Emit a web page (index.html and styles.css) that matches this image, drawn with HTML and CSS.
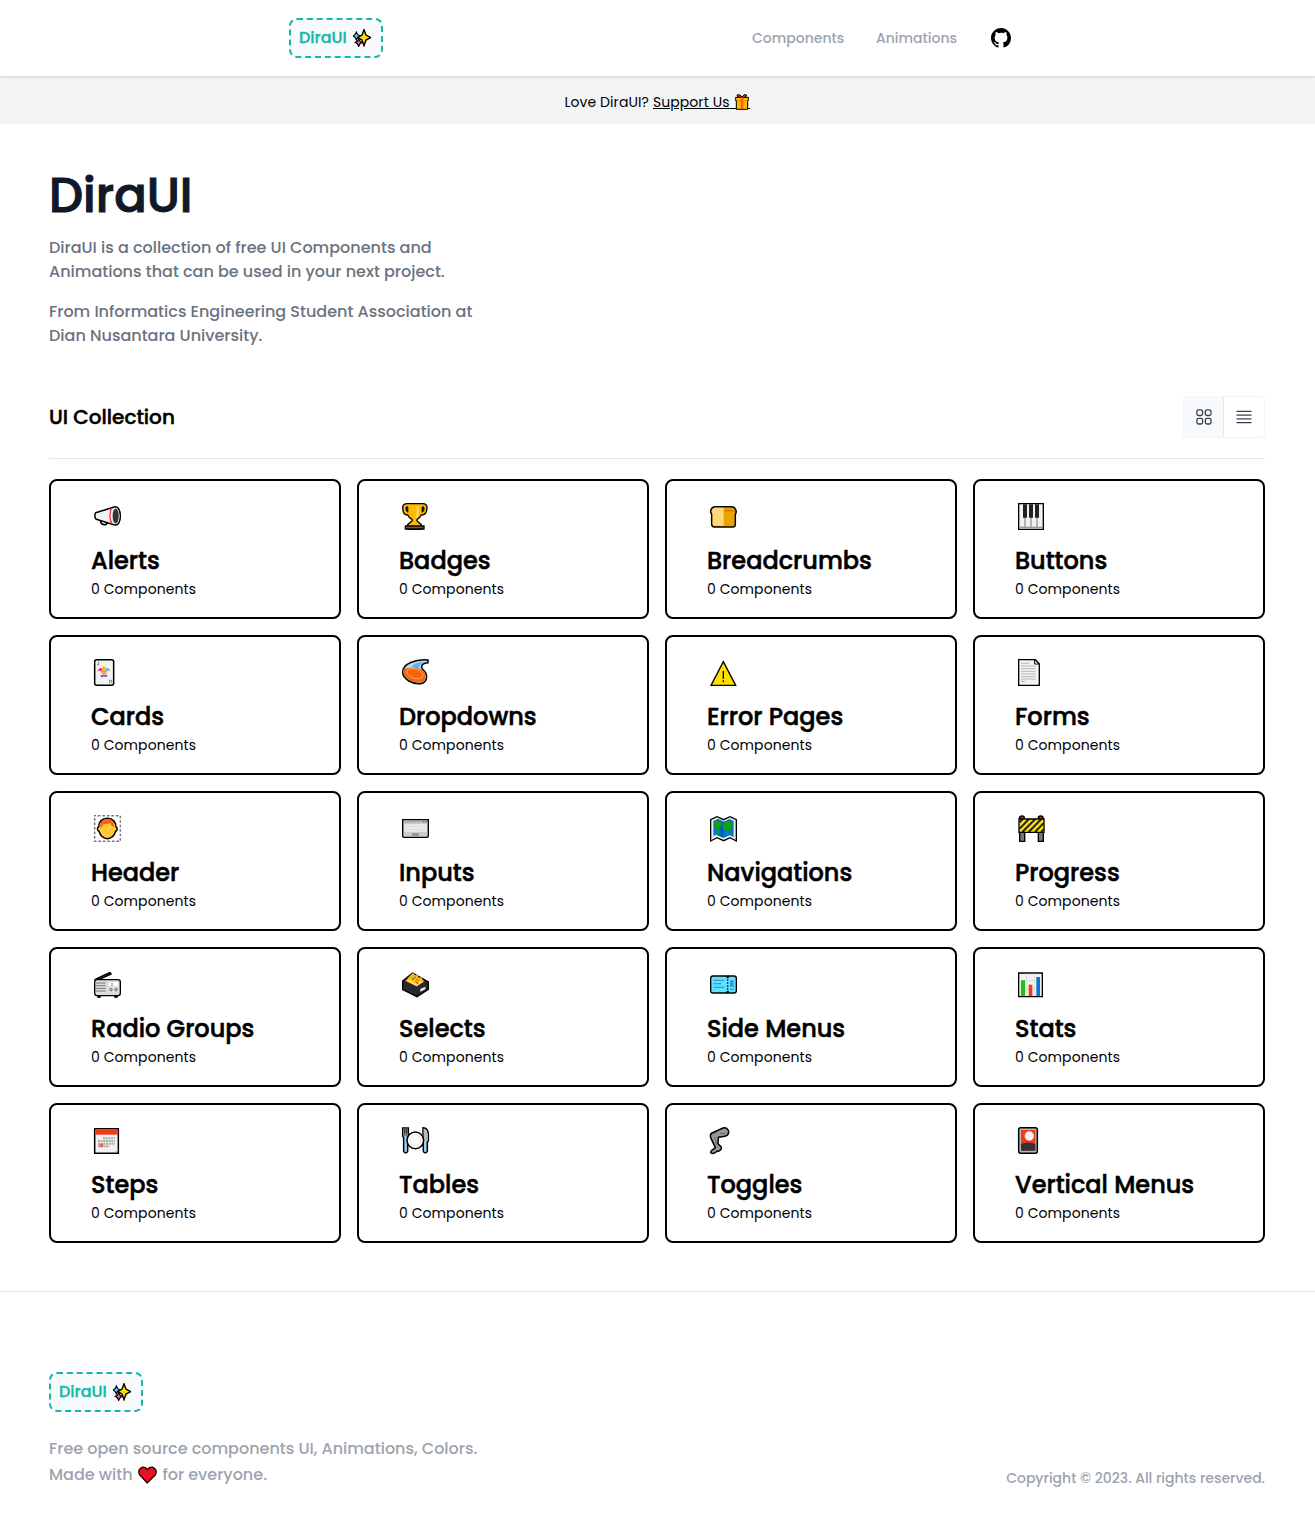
FILE: index.html
```html
<!DOCTYPE html>
<html lang="en">
<head>
<meta charset="utf-8">
<title>DiraUI</title>
<link rel="stylesheet" href="styles.css">
</head>
<body>
<svg class="defs" width="0" height="0">
  <symbol id="sparkles" viewBox="0 0 54 54">
    <path d="M10 9l4 8 8 4-8 4-4 8-4-8-6-4 6-4z" fill="#5cd3f0" stroke="#000" stroke-width="3.6"/>
    <path d="M17 30l4 7 7 3-7 4-4 8-4-8-6-4 6-3z" fill="#f06aa8" stroke="#000" stroke-width="3.6"/>
    <path d="M33 2l6 16 14 8-14 7-6 17-6-17-13-7 13-8z" fill="#fce100" stroke="#000" stroke-width="4.2"/>
  </symbol>
</svg>
<header class="header">
  <div class="header-inner">
    <a class="logo"><span class="logo-text">DiraUI</span><svg class="logo-icon"><use href="#sparkles"/></svg></a>
    <nav class="nav">
      <a class="nav-link">Components</a>
      <a class="nav-link nav-second">Animations</a>
      <svg class="github" viewBox="0 0 16 16"><path d="M8 0C3.58 0 0 3.58 0 8c0 3.54 2.29 6.53 5.47 7.59.4.07.55-.17.55-.38 0-.19-.01-.82-.01-1.49-2.01.37-2.53-.49-2.69-.94-.09-.23-.48-.94-.82-1.13-.28-.15-.68-.52-.01-.53.63-.01 1.08.58 1.23.82.72 1.21 1.87.87 2.33.66.07-.52.28-.87.51-1.07-1.78-.2-3.64-.89-3.64-3.95 0-.87.31-1.59.82-2.15-.08-.2-.36-1.02.08-2.12 0 0 .67-.21 2.2.82A7.6 7.6 0 0 1 8 3.86c.68 0 1.36.09 2 .27 1.53-1.04 2.2-.82 2.2-.82.44 1.1.16 1.92.08 2.12.51.56.82 1.27.82 2.15 0 3.07-1.87 3.75-3.65 3.95.29.25.54.73.54 1.48 0 1.07-.01 1.93-.01 2.2 0 .21.15.46.55.38A8.01 8.01 0 0 0 16 8c0-4.42-3.58-8-8-8z"/></svg>
    </nav>
  </div>
</header>
<div class="banner"><span class="banner-text">Love DiraUI?</span> <a class="support"><span>Support Us</span><svg class="gift" viewBox="0 0 48 48"><path d="M-13 43.5h61" stroke="#000" stroke-width="3"/><path d="M12 10l-3-7 8-1 7 7 6-7 8 1-3 7z" fill="#f03a17" stroke="#000" stroke-width="3"/><path d="M5 10h38v10h-2v26H7V20H5z" fill="#ffb900" stroke="#000" stroke-width="3"/><path d="M8 20h32" stroke="#d67d00" stroke-width="2"/><path d="M20 10h8v35h-8z" fill="#f7630c"/></svg></a></div>
<main class="container">
  <h1 class="title">DiraUI</h1>
  <p class="lead">DiraUI is a collection of free UI Components and<br>Animations that can be used in your next project.</p>
  <p class="lead">From Informatics Engineering Student Association at<br>Dian Nusantara University.</p>
  <div class="toolbar">
    <h2 class="section-title">UI Collection</h2>
    <div class="switch">
      <span class="switch-item active"><svg viewBox="0 0 20 20" fill="none" stroke="#374151" stroke-width="1.3"><rect x="2.9" y="2.8" width="5.7" height="5.7" rx="1.7"/><rect x="11.3" y="2.8" width="5.7" height="5.7" rx="1.7"/><rect x="2.9" y="11.3" width="5.7" height="5.7" rx="1.7"/><rect x="11.3" y="11.3" width="5.7" height="5.7" rx="1.7"/></svg></span>
      <span class="switch-item"><svg viewBox="0 0 20 20" stroke="#374151" stroke-width="1.25" stroke-linecap="round"><path d="M3 4.4h14M3 8.2h14M3 11.8h14M3 15.6h14"/></svg></span>
    </div>
  </div>
  <div class="grid">
    <article class="card"><svg class="icon" viewBox="0 0 81 81"><path d="M20 54c0 14 20 14 20 4" fill="none" stroke="#000" stroke-width="5"/><path d="M5 29l56-17c11-3 18 10 18 27S73 68 62 66L7 49c-5-3-6-16-2-20z" fill="#f2f2f2" stroke="#000" stroke-width="4.5"/><path d="M53 15c-7 12-7 36 1 47" fill="none" stroke="#f4303e" stroke-width="4"/><ellipse cx="65" cy="39" rx="11" ry="24" fill="#ddd"/><ellipse cx="65" cy="39" rx="9" ry="22" fill="#333"/></svg><h3 class="card-title">Alerts</h3><p class="count">0 Components</p></article>
    <article class="card"><svg class="icon" viewBox="0 0 81 81"><path d="M16 2h46q13 0 13 12c0 14-6 22-17 22q-4 9-13 13v5l13 11v14H17V65l13-11v-5q-9-4-13-13C6 36 2 28 2 14Q2 2 16 2z" fill="#ffb900" stroke="#000" stroke-width="4"/><path d="M12 12q5-3 6 1v15q-9-2-6-16zM66 12q-5-3-6 1v15q9-2 6-16z" fill="#222" stroke="#000" stroke-width="2"/><path d="M10 69h56v9H10z" fill="#8e562e" stroke="#000" stroke-width="4"/><path d="M47 10v25q-1 5-6 9" fill="none" stroke="#ffd679" stroke-width="6"/></svg><h3 class="card-title">Badges</h3><p class="count">0 Components</p></article>
    <article class="card"><svg class="icon" viewBox="0 0 81 81"><path d="M16 11h49c11 0 17 15 11 23v30q0 8-8 8H13q-8 0-8-8V34C-2 25 4 11 16 11z" fill="#eaa300" stroke="#000" stroke-width="4.5"/><path d="M16 14h25v54H13q-5 0-5-5V33C2 25 7 14 16 14z" fill="#ffd679"/><path d="M43 23h31" stroke="#d67d00" stroke-width="5"/></svg><h3 class="card-title">Breadcrumbs</h3><p class="count">0 Components</p></article>
    <article class="card"><svg class="icon" viewBox="0 0 81 81"><path d="M2 2h74v77H2z" fill="#f2f2f2" stroke="#000" stroke-width="4"/><path d="M21 42v34M39 42v34M57 42v34" stroke="#777" stroke-width="3"/><path d="M15 4h12v40H15zM33 4h12v40H33zM51 4h12v40H51z" fill="#222"/><path d="M5 73h68" stroke="#999" stroke-width="4"/></svg><h3 class="card-title">Buttons</h3><p class="count">0 Components</p></article>

    <article class="card"><svg class="icon" viewBox="0 0 81 81"><rect x="2" y="2" width="57" height="77" rx="6" fill="#f2f2f2" stroke="#000" stroke-width="4.5"/><path d="M14 8v9H9M47 73v-9h6v9" fill="none" stroke="#555" stroke-width="2"/><path d="M11 38q3-13 13-10l-2 11-5-6z" fill="#e3008c"/><path d="M49 38q-3-13-13-10l2 11 5-6z" fill="#19b5e5"/><path d="M23 30l7-10 8 10-3 7H25z" fill="#ffb900"/><circle cx="30" cy="40" r="8" fill="#f7a66a"/><path d="M26 38h1M34 38h1" stroke="#333" stroke-width="3"/><path d="M19 47l7 2 4-2 4 2 7-2-4 8h-3l-4-4-4 4h-4z" fill="#7654b8"/></svg><h3 class="card-title">Cards</h3><p class="count">0 Components</p></article>
    <article class="card"><svg class="icon" viewBox="0 0 81 81"><path d="M78 3v8C60 12 53 23 65 34c16 16 9 38-10 40C31 76 2 60 2 40 2 14 41 0 78 3z" fill="#b5def5" stroke="#000" stroke-width="4.5"/><path d="M5 31C19 23 62 23 68 43c9 18-4 27-13 28C33 73-4 55 5 31z" fill="#f7630c"/><path d="M28 24C40 8 57 12 70 7c-15 8-20 12-18 22z" fill="#69aee7"/><ellipse cx="39" cy="44" rx="25" ry="14" transform="rotate(18 39 44)" fill="#f7630c" stroke="#ffb083" stroke-width="2.5"/></svg><h3 class="card-title">Dropdowns</h3><p class="count">0 Components</p></article>
    <article class="card"><svg class="icon" viewBox="0 0 81 81"><path d="M40 8l37 71H3z" fill="#fce100" stroke="#000" stroke-width="4"/><path d="M40 36v23M40 64v6" stroke="#000" stroke-width="4"/></svg><h3 class="card-title">Error Pages</h3><p class="count">0 Components</p></article>
    <article class="card"><svg class="icon" viewBox="0 0 81 81"><path d="M2 2h50l12 12v65H2z" fill="#f2f2f2" stroke="#000" stroke-width="4"/><path d="M50 3v12h13z" fill="#fff" stroke="#000" stroke-width="3"/><path d="M9 13h24M9 21h44M9 29h44M9 37h44M9 45h44M9 53h44M9 60h44M9 67h13" stroke="#b8b8b8" stroke-width="3"/></svg><h3 class="card-title">Forms</h3><p class="count">0 Components</p></article>

    <article class="card"><svg class="icon" viewBox="0 0 81 81"><rect x="2" y="2" width="77" height="77" fill="none" stroke="#777" stroke-width="4.5" stroke-dasharray="8 5.5" stroke-dashoffset="4"/><path d="M40 10c17 0 26 12 26 25 6 2 4 13-1 14-4 13-14 22-25 22S19 62 15 49c-5-1-7-12-1-14 0-13 9-25 26-25z" fill="#ffc83d" stroke="#000" stroke-width="4.5"/><path d="M20 39c-3-17 7-27 20-27 15 0 22 10 20 24-7-1-10-7-10-12-11 6-25-1-25 11z" fill="#f7630c"/></svg><h3 class="card-title">Header</h3><p class="count">0 Components</p></article>
    <article class="card"><svg class="icon" viewBox="0 0 81 81"><path d="M2 14h77v49q0 4-4 4H6q-4 0-4-4z" fill="#ccc" stroke="#000" stroke-width="4"/><path d="M6 20h69" stroke="#aaa" stroke-width="5"/><path d="M63 20h4" stroke="#13a10e" stroke-width="4"/><path d="M71 20h3" stroke="#f03a17" stroke-width="4"/><path d="M7 28h67v23H7z" fill="#f2f2f2"/><path d="M9 34h63M8 42h65" stroke="#bbb" stroke-width="2" stroke-dasharray="5 2"/><path d="M9 48h63" stroke="#ccc" stroke-width="2"/><path d="M30 54h21v10H30z" fill="#999"/></svg><h3 class="card-title">Inputs</h3><p class="count">0 Components</p></article>
    <article class="card"><svg class="icon" viewBox="0 0 81 81"><path d="M2 14L21 5l20 9 19-9 19 9v64l-19-10-19 9-20-9L2 78z" fill="#f2f2f2" stroke="#000" stroke-width="4"/><path d="M10 18l13-6 18 8 18-8 12 6v48l-12-5-18 8-18-8-13 4z" fill="#0078d4"/><path d="M23 12l18 8v49l-18-8z" fill="#0063b1"/><path d="M12 22l12-6 12 7-5 12-6 5 5 6-4 14-5-9-1-10-9-11zM39 30l7-9 18-2 5 9-6 7 1 6-8 2-3 12-8-12-7-4z" fill="#13a10e"/><path d="M62 48l6 2-1 7-6-2z" fill="#13a10e"/><path d="M11 65l9-4" stroke="#fff" stroke-width="4"/></svg><h3 class="card-title">Navigations</h3><p class="count">0 Components</p></article>
    <article class="card"><svg class="icon" viewBox="0 0 81 81"><circle cx="12" cy="10" r="7" fill="#f03a17" stroke="#000" stroke-width="5"/><circle cx="68" cy="10" r="7" fill="#f03a17" stroke="#000" stroke-width="5"/><path d="M5 49h15v30H5zM61 49h15v30H61z" fill="#777" stroke="#000" stroke-width="4"/><path d="M3 12h75v40H3z" fill="#fce100"/><path d="M5 22l9-10M5 41l28-29M13 51l39-39M32 51l38-39M51 51l25-26M69 51l8-8" stroke="#222" stroke-width="6"/><path d="M3 12h75v40H3z" fill="none" stroke="#000" stroke-width="4"/></svg><h3 class="card-title">Progress</h3><p class="count">0 Components</p></article>

    <article class="card"><svg class="icon" viewBox="0 0 81 81"><path d="M11 73h8v6h-8zM62 73h8v6h-8z" fill="#000" stroke="#000" stroke-width="3"/><path d="M7 24L45 6q6-2 6 3L17 25z" fill="#999" stroke="#000" stroke-width="4.5"/><rect x="2" y="26" width="77" height="48" rx="7" fill="#ddd" stroke="#000" stroke-width="4"/><path d="M6 36h29M6 44h29M6 52h29M6 60h29" stroke="#777" stroke-width="3"/><path d="M45 33h27v12H45z" fill="#fff"/><path d="M54 35v10" stroke="#f7630c" stroke-width="3"/><circle cx="51" cy="56" r="4" fill="#aaa" stroke="#666" stroke-width="2"/><circle cx="66" cy="56" r="4" fill="#aaa" stroke="#666" stroke-width="2"/></svg><h3 class="card-title">Radio Groups</h3><p class="count">0 Components</p></article>
    <article class="card"><svg class="icon" viewBox="0 0 81 81"><path d="M2 30L32 6l47 27v22L45 77 2 56z" fill="#292929" stroke="#000" stroke-width="4"/><path d="M10 30l18-20 6-4 5 7 8-1 3 8 8-1 4 8 5 4-22 15z" fill="#ffb900"/><path d="M14 29l29 17 20-13-7-3-10 9-26-14z" fill="#ffd679"/><path d="M31 22l5 3" stroke="#13a10e" stroke-width="4"/><path d="M36 17l5 3M43 25l6 4" stroke="#0078d4" stroke-width="3"/><path d="M41 33l7 4" stroke="#f03a17" stroke-width="4"/><path d="M55 54l15-7v8l-15 7z" fill="#f2f2f2"/></svg><h3 class="card-title">Selects</h3><p class="count">0 Components</p></article>
    <article class="card"><svg class="icon" viewBox="0 0 81 81"><rect x="2" y="15" width="77" height="51" rx="7" fill="#5ce3ff" stroke="#000" stroke-width="4"/><path d="M10 28h33M10 38h24M10 49h33M60 55h11" stroke="#3a96dd" stroke-width="3.5"/><path d="M60 28h11v20H60z" fill="#3a96dd"/><path d="M53 16v50" stroke="#000" stroke-width="4" stroke-dasharray="4 5"/><circle cx="53" cy="18" r="4"/><circle cx="53" cy="63" r="4"/></svg><h3 class="card-title">Side Menus</h3><p class="count">0 Components</p></article>
    <article class="card"><svg class="icon" viewBox="0 0 81 81"><path d="M2 6h71v71H2z" fill="#f2f2f2" stroke="#000" stroke-width="4"/><path d="M26 8v67M49 8v67M4 29h67M4 53h67" stroke="#ddd" stroke-width="3"/><path d="M9 28h12v47H9z" fill="#16c60c"/><path d="M32 41h11v34H32z" fill="#f03a17"/><path d="M55 18h11v57H55z" fill="#0078d4"/></svg><h3 class="card-title">Stats</h3><p class="count">0 Components</p></article>

    <article class="card"><svg class="icon" viewBox="0 0 81 81"><path d="M2 5h71v74H2z" fill="#f2f2f2" stroke="#000" stroke-width="4.5"/><path d="M4 7h67v16H4z" fill="#f03a17"/><path d="M27 34h36M12 42h51M12 50h51M12 58h34" stroke="#aaa" stroke-width="6" stroke-dasharray="6 2"/><circle cx="22" cy="55" r="4" fill="#f7846a" stroke="#f03a17" stroke-width="3"/><path d="M65 75l6-7" stroke="#bbb" stroke-width="3"/></svg><h3 class="card-title">Steps</h3><p class="count">0 Components</p></article>
    <article class="card"><svg class="icon" viewBox="0 0 81 81"><path d="M2 3h17v24l-2 6v40q-6 9-12 0V33l-3-6z" fill="#9fd3f5" stroke="#000" stroke-width="4.5"/><path d="M4 4h13v24H4z" fill="#777"/><path d="M8 4v15M14 4v15" stroke="#000" stroke-width="2"/><path d="M63 2c12 0 16 8 16 22v18l-3 3v28q-6 9-12 0z" fill="#9fd3f5" stroke="#000" stroke-width="4.5"/><path d="M65 5c8 0 12 8 12 19v18H65z" fill="#bbb"/><circle cx="40" cy="40" r="25" fill="#fff" stroke="#000" stroke-width="4.5"/><circle cx="40" cy="40" r="16" fill="#fafafa" stroke="#ddd" stroke-width="2"/></svg><h3 class="card-title">Tables</h3><p class="count">0 Components</p></article>
    <article class="card"><svg class="icon" viewBox="0 0 81 81"><path d="M6 18L39 3c15-5 22 14 12 22-7 5-17 3-26 6l-1 19 10 10c2 10-7 12-13 13-9 9-19 7-19 3 0-7 9-8 14-14L3 34C0 27 1 21 6 18z" fill="#999" stroke="#000" stroke-width="4.5"/><path d="M11 22q4-4 10-5M30 19h16M14 30l6 24" fill="none" stroke="#666" stroke-width="3"/></svg><h3 class="card-title">Toggles</h3><p class="count">0 Components</p></article>
    <article class="card"><svg class="icon" viewBox="0 0 81 81"><rect x="2" y="2" width="56" height="77" rx="6" fill="#bbb" stroke="#000" stroke-width="4.5"/><path d="M9 9h43v62H9z" fill="#f03a17"/><circle cx="34" cy="27" r="14" fill="#f2f2f2"/><path d="M9 51q22-9 43 0v20H9z" fill="#333"/></svg><h3 class="card-title">Vertical Menus</h3><p class="count">0 Components</p></article>
  </div>
</main>
<footer class="footer">
  <div class="container">
    <a class="logo"><span class="logo-text">DiraUI</span><svg class="logo-icon"><use href="#sparkles"/></svg></a>
    <div class="footer-row">
      <p class="about">Free open source components UI, Animations, Colors.<br>Made with <svg class="heart" viewBox="0 0 57 54"><path d="M28 51L5 27C-4 11 14-5 28 10 43-5 61 11 52 27z" fill="#e81224" stroke="#000" stroke-width="3.6"/></svg> for everyone.</p>
      <p class="copyright">Copyright © 2023. All rights reserved.</p>
    </div>
  </div>
</footer>
</body>
</html>
```
FILE: styles.css
```css
* { box-sizing: border-box; }
body { margin: 0; background: #fff; color: #000; font-family: Poppins, Inter, "Open Sans", sans-serif; font-size: 16px; font-weight: 500; line-height: 24px; }
h1, h2, h3, p { margin: 0; font-weight: 500; }
svg { display: block; overflow: visible; }
.defs { display: none; }
.header { height: 76px; background: #fff; position: relative; box-shadow: 0 1px 3px rgba(0,0,0,.1), 0 1px 2px rgba(0,0,0,.06); }
.header-inner { max-width: 768px; height: 76px; margin: 0 auto; padding: 0 16.5px 0 15.5px; display: flex; align-items: center; justify-content: space-between; }
.logo { display: flex; align-items: center; width: 94px; height: 40px; padding: 0 8px; border: 2px dashed #14b8a6; border-radius: 8px; background: #f9fafb; color: #14b8a6; }
.logo-text { width: 54px; white-space: nowrap; -webkit-text-stroke: .35px currentColor; }
.logo-icon { width: 18px; height: 18px; flex: none; }
.nav { display: flex; align-items: center; font-size: 14px; color: #9ca3af; padding-right: 14px; }
.nav-link { width: 92px; margin-right: 32px; white-space: nowrap; }
.nav-second { width: 81px; margin-right: 34px; }
.github { width: 20px; height: 20px; fill: #000; }
.banner { height: 48px; padding: 4px 1px 0 0; background: #f3f4f6; display: flex; justify-content: center; align-items: center; gap: 4px; font-size: 14px; font-weight: 400; letter-spacing: .08px; }
.support { display: flex; align-items: center; gap: 4px; text-decoration: underline; }
.gift { width: 16px; height: 16px; }
.container { max-width: 1280px; margin: 0 auto; padding: 0 32.5px 0 31.5px; }
.title { padding-top: 48px; font-size: 48px; line-height: 48px; color: #111827; -webkit-text-stroke: 1.1px currentColor; }
.lead { margin-top: 16px; color: #6b7280; }
.toolbar { margin-top: 48px; height: 63px; display: flex; justify-content: space-between; align-items: flex-start; border-bottom: 1px solid #e5e7eb; }
.section-title { font-size: 20px; line-height: 42px; -webkit-text-stroke: .45px currentColor; }
.switch { display: flex; width: 82px; height: 42px; border: 1px solid #f3f4f6; border-radius: 4px; overflow: hidden; }
.switch-item { width: 40px; display: flex; align-items: center; justify-content: center; }
.switch-item svg { width: 20px; height: 20px; }
.active { width: 40px; background: #f9fafb; border-right: 1px solid #e5e7eb; }
.grid { display: grid; grid-template-columns: repeat(4, 1fr); gap: 16px; padding: 20px 0 48px; }
.card { height: 140px; padding: 22px 40px 0; border: 2px solid #000; border-radius: 8px; }
.icon { width: 27px; height: 27px; margin: 0 0 15px 3px; }
.card-title { font-size: 24px; line-height: 32px; -webkit-text-stroke: .55px currentColor; }
.count { margin-top: 2px; font-size: 14px; font-weight: 400; line-height: 20px; letter-spacing: .08px; }
.footer { border-top: 1px solid #e5e7eb; padding-top: 80px; height: 237px; }
.footer-row { display: flex; justify-content: space-between; margin-top: 24px; color: #9ca3af; }
.about { line-height: 26px; }
.heart { display: inline-block; width: 19px; height: 18px; margin: 0 1.5px 0 1px; vertical-align: -4px; }
.copyright { font-size: 14px; line-height: 20px; margin-top: 32px; }
```
